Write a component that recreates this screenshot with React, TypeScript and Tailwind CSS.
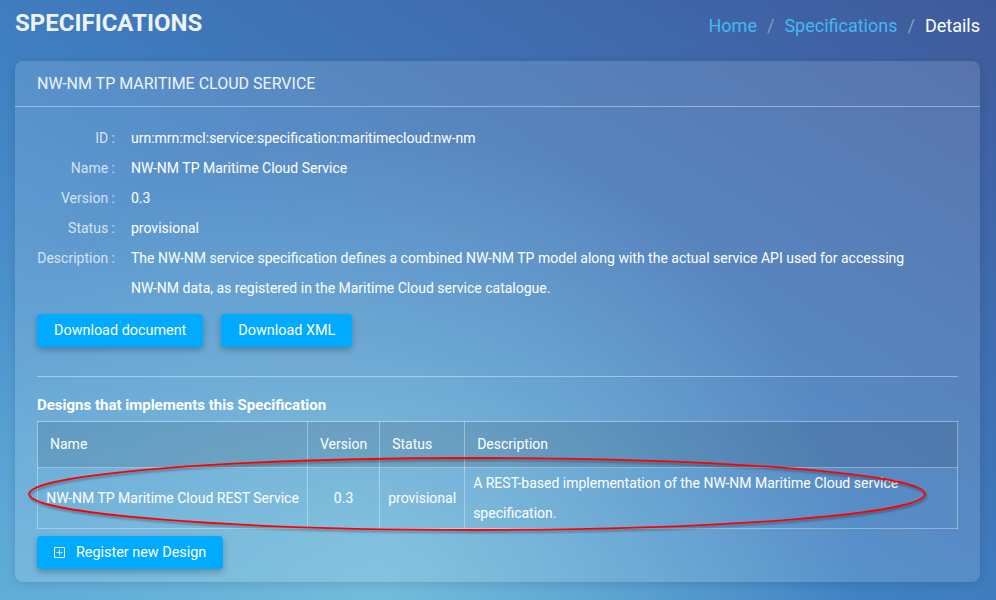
import { Plus } from "lucide-react";

const details = [
  { label: "ID", value: "urn:mrn:mcl:service:specification:maritimecloud:nw-nm" },
  { label: "Name", value: "NW-NM TP Maritime Cloud Service" },
  { label: "Version", value: "0.3" },
  { label: "Status", value: "provisional" },
  {
    label: "Description",
    value:
      "The NW-NM service specification defines a combined NW-NM TP model along with the actual service API used for accessing NW-NM data, as registered in the Maritime Cloud service catalogue.",
  },
];

function BlueButton({ children }: { children: React.ReactNode }) {
  return (
    <button className="h-[33px] px-[17px] rounded-[4px] bg-[#00aaff] text-white text-[14.4px] shadow-[0_3px_6px_rgba(0,0,0,0.25)] flex items-center gap-[11px]">
      {children}
    </button>
  );
}

export default function App() {
  return (
    <div
      className="relative w-[996px] h-[600px] overflow-hidden text-white bg-[radial-gradient(ellipse_at_38%_100%,rgba(135,208,225,0.65),transparent_55%),linear-gradient(to_top_right,#5aa8d8,#3f80c2_45%,#3f5a9c)]"
      style={{ fontFamily: "Roboto, 'Liberation Sans', sans-serif" }}
    >
      {/* page header */}
      <div className="flex items-start justify-between pl-[15px] pr-[16px] pt-[5px] h-[61px]">
        <h1 className="text-[24px] font-bold text-[#eef3fa]">SPECIFICATIONS</h1>
        <div className="flex items-center text-[18px] pt-[7px] gap-[10px]">
          <span className="text-[#44b8f5]">Home</span>
          <span className="text-[#8a9cb4]">/</span>
          <span className="text-[#44b8f5]">Specifications</span>
          <span className="text-[#8a9cb4]">/</span>
          <span className="text-white">Details</span>
        </div>
      </div>

      {/* card */}
      <div className="mx-[15px] w-[965px] h-[521px] rounded-[8px] bg-white/[0.13] shadow-[0_2px_10px_rgba(0,0,0,0.12)]">
        <div className="h-[46px] px-[22px] flex items-center text-[16px] text-[#eef4fb] border-b border-white/40">
          NW-NM TP MARITIME CLOUD SERVICE
        </div>

        <div className="px-[22px] pt-[16px]">
          <div className="flex flex-col text-[14px]">
            {details.map((d) => (
              <div key={d.label} className="flex leading-[30px]">
                <div className="w-[78px] shrink-0 text-right text-white/75">{d.label} :</div>
                <div className="pl-[16px] w-[800px]">{d.value}</div>
              </div>
            ))}
          </div>

          <div className="flex gap-[18px] mt-[11px]">
            <BlueButton>Download document</BlueButton>
            <BlueButton>Download XML</BlueButton>
          </div>

          <div className="mt-[29px] border-t border-white/40" />

          <div className="mt-[19px] text-[15px] font-bold leading-[18px]">
            Designs that implements this Specification
          </div>

          <table className="mt-[7px] w-[921px] border-collapse text-[14px] border border-white/35">
            <thead>
              <tr className="bg-black/10 h-[46px]">
                <th className="w-[270px] border border-white/35 px-[12px] text-left font-normal">Name</th>
                <th className="w-[72px] border border-white/35 px-[12px] text-left font-normal">Version</th>
                <th className="w-[85px] border border-white/35 px-[12px] text-left font-normal">Status</th>
                <th className="border border-white/35 px-[12px] text-left font-normal">Description</th>
              </tr>
            </thead>
            <tbody>
              <tr className="leading-[30px]">
                <td className="border border-white/35 px-[8px] text-center">NW-NM TP Maritime Cloud REST Service</td>
                <td className="border border-white/35 px-[8px] text-center">0.3</td>
                <td className="border border-white/35 px-[8px] text-center">provisional</td>
                <td className="border border-white/35 pl-[8px] pr-[50px]">
                  A REST-based implementation of the NW-NM Maritime Cloud service specification.
                </td>
              </tr>
            </tbody>
          </table>

          <div className="mt-[7px] flex">
            <BlueButton>
              <span className="w-[11px] h-[11px] border border-white rounded-[1px] flex items-center justify-center">
                <Plus size={9} strokeWidth={2} />
              </span>
              Register new Design
            </BlueButton>
          </div>
        </div>
      </div>

      {/* annotation ellipse drawn over the table row */}
      <svg className="absolute left-[25px] top-[453px] pointer-events-none" width="906" height="82" viewBox="0 0 906 82">
        <ellipse
          cx="452"
          cy="41"
          rx="448"
          ry="36"
          fill="none"
          stroke="#ff0000"
          strokeWidth="1.8"
          style={{ filter: "drop-shadow(1px 2px 1px rgba(0,0,0,0.35))" }}
        />
      </svg>
    </div>
  );
}
